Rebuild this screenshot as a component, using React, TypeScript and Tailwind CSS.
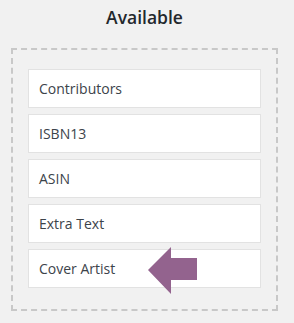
import React from 'react';

const fields = ['Contributors', 'ISBN13', 'ASIN', 'Extra Text', 'Cover Artist'];

const Arrow: React.FC = () => (
  <svg className="absolute left-[119px] top-[-3px]" width="50" height="48" viewBox="0 0 50 48">
    <polygon points="0,23 23,0 23,11 49,11 49,33 23,33 23,47" fill="#93638e" />
  </svg>
);

const App: React.FC = () => {
  return (
    <div className="w-[294px] h-[323px] bg-[#f1f1f1] pl-[11px] pt-[5px]" style={{ fontFamily: '"Open Sans", sans-serif' }}>
      <h2 className="w-[267px] text-center text-[17.5px] leading-[24px] font-semibold text-[#23282d]">Available</h2>
      <div className="mt-[19px] w-[267px] border-2 border-dashed border-[#c8c8c8] px-[15px] pt-[19px] pb-[21px] flex flex-col gap-[6px]">
        {fields.map((f, i) => (
          <div key={f} className="relative h-[39px] bg-white border border-[#e2e2e2] pl-[10px] flex items-center text-[14px] text-[#3c434a]">
            {f}
            {i === fields.length - 1 && <Arrow />}
          </div>
        ))}
      </div>
    </div>
  );
};

export default App;
